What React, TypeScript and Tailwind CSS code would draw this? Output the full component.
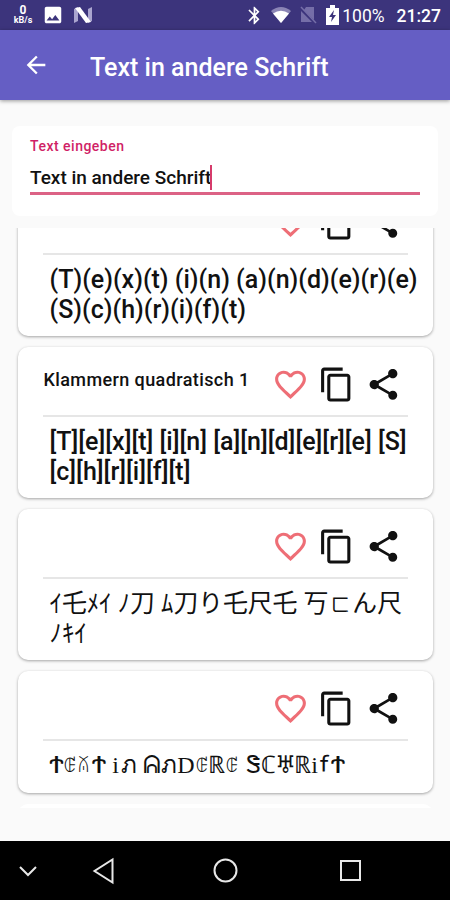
import { MdArrowBack, MdBluetooth, MdContentCopy, MdFavoriteBorder, MdImage, MdShare } from "react-icons/md";
import type { ReactNode } from "react";

const runic: [string, number, string?][] = [
  ["Ϯ", 15, "wide"], ["ꂅ", 13, "yi"], ["ꊼ", 14, "yi"], ["Ϯ", 16, "wide"], [" ", 5],
  ["i", 8, "serif"], ["ภ", 18], [" ", 5],
  ["ᕱ", 18], ["ภ", 17], ["D", 17, "serif"], ["ꂅ", 14, "yi"], ["ℝ", 16], ["ꂅ", 14, "yi"], [" ", 7],
  ["Ꮥ", 15], ["ℂ", 16], ["♅", 18, "symbol"], ["ℝ", 16], ["i", 8, "serif"], ["ꬵ", 11], ["Ϯ", 16, "wide"],
];

const runicStyles: Record<string, string> = {
  serif: "font-['Liberation_Serif',serif] text-[24px]",
  symbol: "font-['DejaVu_Sans',sans-serif] text-[24px]",
  yi: "text-[18px]",
  wide: "scale-x-125",
};

const RunicText = () => (
  <p className="-ml-px flex h-[29.5px] items-center whitespace-pre text-[24px] font-normal">
    {runic.map(([ch, width, kind], i) => (
      <span key={i} style={{ width }} className={`flex shrink-0 justify-center ${kind ? runicStyles[kind] : ""}`}>
        {ch}
      </span>
    ))}
  </p>
);

const Card = ({ title, children }: { title?: string; children: ReactNode }) => (
  <div className="rounded-[10px] bg-white px-[25px] pb-[11px] shadow-[0_1px_3px_rgba(0,0,0,0.35)]">
    <div className="flex h-[70px] items-center border-b-2 border-[#e6e6e6] pt-1.5">
      <h2 className="flex-1 pb-2 pl-px text-[18px] leading-5 font-medium tracking-[0.4px] whitespace-nowrap">{title}</h2>
      <div className="mr-[6px] flex gap-[9.5px] text-[37px]">
        <MdFavoriteBorder className="text-[#ee6e76]" />
        <MdContentCopy />
        <MdShare />
      </div>
    </div>
    <div className="-mr-4 pt-[10px] pb-px pl-[7px] text-[25px] leading-[29.5px] font-medium">{children}</div>
  </div>
);

const App = () => {
  return (
    <div className="flex h-[900px] w-[450px] flex-col overflow-hidden bg-[#fafafa] font-[Roboto,'Noto_Sans_CJK_JP',sans-serif] text-[#111]">
      <div className="flex h-[30px] items-center bg-[#3c347c] pr-[9px] pl-3 text-white">
        <div className="w-[22px] text-center leading-[10px] font-bold">
          <div className="text-[12px]">0</div>
          <div className="text-[9px]">kB/s</div>
        </div>
        <MdImage className="ml-2 text-[22px]" />
        <svg className="ml-2.5 h-4 w-[18px]" viewBox="0 0 18 16">
          <path d="M0 2L4 0V14L0 16ZM14 2L18 0V14L14 16Z" fill="#aaa5cf" />
          <path d="M1 1L6 0L17 15L12 16Z" fill="#fff" />
        </svg>
        <div className="flex-1" />
        <MdBluetooth className="text-[21px]" />
        <svg className="ml-1.5 h-4 w-5" viewBox="0 0 20 16">
          <path d="M0 4Q10 -4 20 4L10 16Z" fill="#8b85b5" />
          <path d="M2 6.500Q10 1 18 6.500L10 16Z" fill="#fff" />
        </svg>
        <svg className="ml-[9px] h-[18px] w-[17px]" viewBox="0 0 17 18">
          <path d="M6 1H14V14L4 4Z M1 5L12 16H1Z" fill="#756ea8" />
          <path d="M1 1L16 17" stroke="#756ea8" strokeWidth="1.5" />
        </svg>
        <svg className="ml-[9px] h-5 w-[13px]" viewBox="0 0 13 20">
          <path d="M0 3H4V0H9V3H13V20H0Z" fill="#fff" />
          <path d="M8 5L3 12H6L5 17L10 10H7Z" fill="#3c347c" />
        </svg>
        <span className="ml-[3px] pt-0.5 text-[17.500px]">100%</span>
        <span className="ml-[12px] pt-0.5 text-[17.500px] font-medium">21:27</span>
      </div>

      <header className="z-10 flex h-[70px] items-center bg-[#655ec4] text-white shadow-[0_1px_4px_rgba(0,0,0,0.4)]">
        <MdArrowBack className="ml-[22px] text-[28px]" />
        <h1 className="ml-[40px] pt-1.5 text-[25px] font-medium">Text in andere Schrift</h1>
      </header>

      <div className="mx-3 mt-[26px] h-[90px] rounded-lg bg-white px-[18px] pt-3">
        <label className="block text-[14px] leading-4 font-medium tracking-[0.5px] text-[#d01f66]">Text eingeben</label>
        <div className="mt-2.5 flex h-[31px] items-center border-b-[3px] border-[#dc6285] text-[19px] font-medium">
          Text in andere Schrift
          <span className="-ml-px mb-0.5 h-[25px] w-0.5 bg-[#d63b6b]" />
        </div>
      </div>

      <div className="mt-3 h-[580px] overflow-hidden px-[17.5px]">
        <div className="-mt-[43px] flex flex-col gap-[11px]">
          <Card>(T)(e)(x)(t) (i)(n) (a)(n)(d)(e)(r)(e) (S)(c)(h)(r)(i)(f)(t)</Card>
          <Card title="Klammern quadratisch 1">
            [T][e][x][t] [i][n] [a][n][d][e][r][e] [S][c][h][r][i][f][t]
          </Card>
          <Card>
            <div className="h-[59px] text-[24.800px] font-normal">
              ｲ乇ﾒｲ ﾉ刀 ﾑ刀り乇尺乇 丂
              <span className="inline-block w-6 text-center text-[19px] leading-5">ㄈ</span>
              ん尺
              <br />
              ﾉｷｲ
            </div>
          </Card>
          <Card>
            <RunicText />
          </Card>
          <div className="h-10 rounded-[10px] bg-white" />
        </div>
      </div>

      <nav className="mt-auto h-[59px] bg-black">
        <svg width="450" height="59" fill="none" stroke="#e8e8e8" strokeWidth="2">
          <path d="M20 26L28 34L36 26" />
          <path d="M112.500 18.500V41.500L94.500 30Z" />
          <circle cx="225.500" cy="29.500" r="11" />
          <path d="M341 20H360V39H341Z" />
        </svg>
      </nav>
    </div>
  );
};

export default App;
